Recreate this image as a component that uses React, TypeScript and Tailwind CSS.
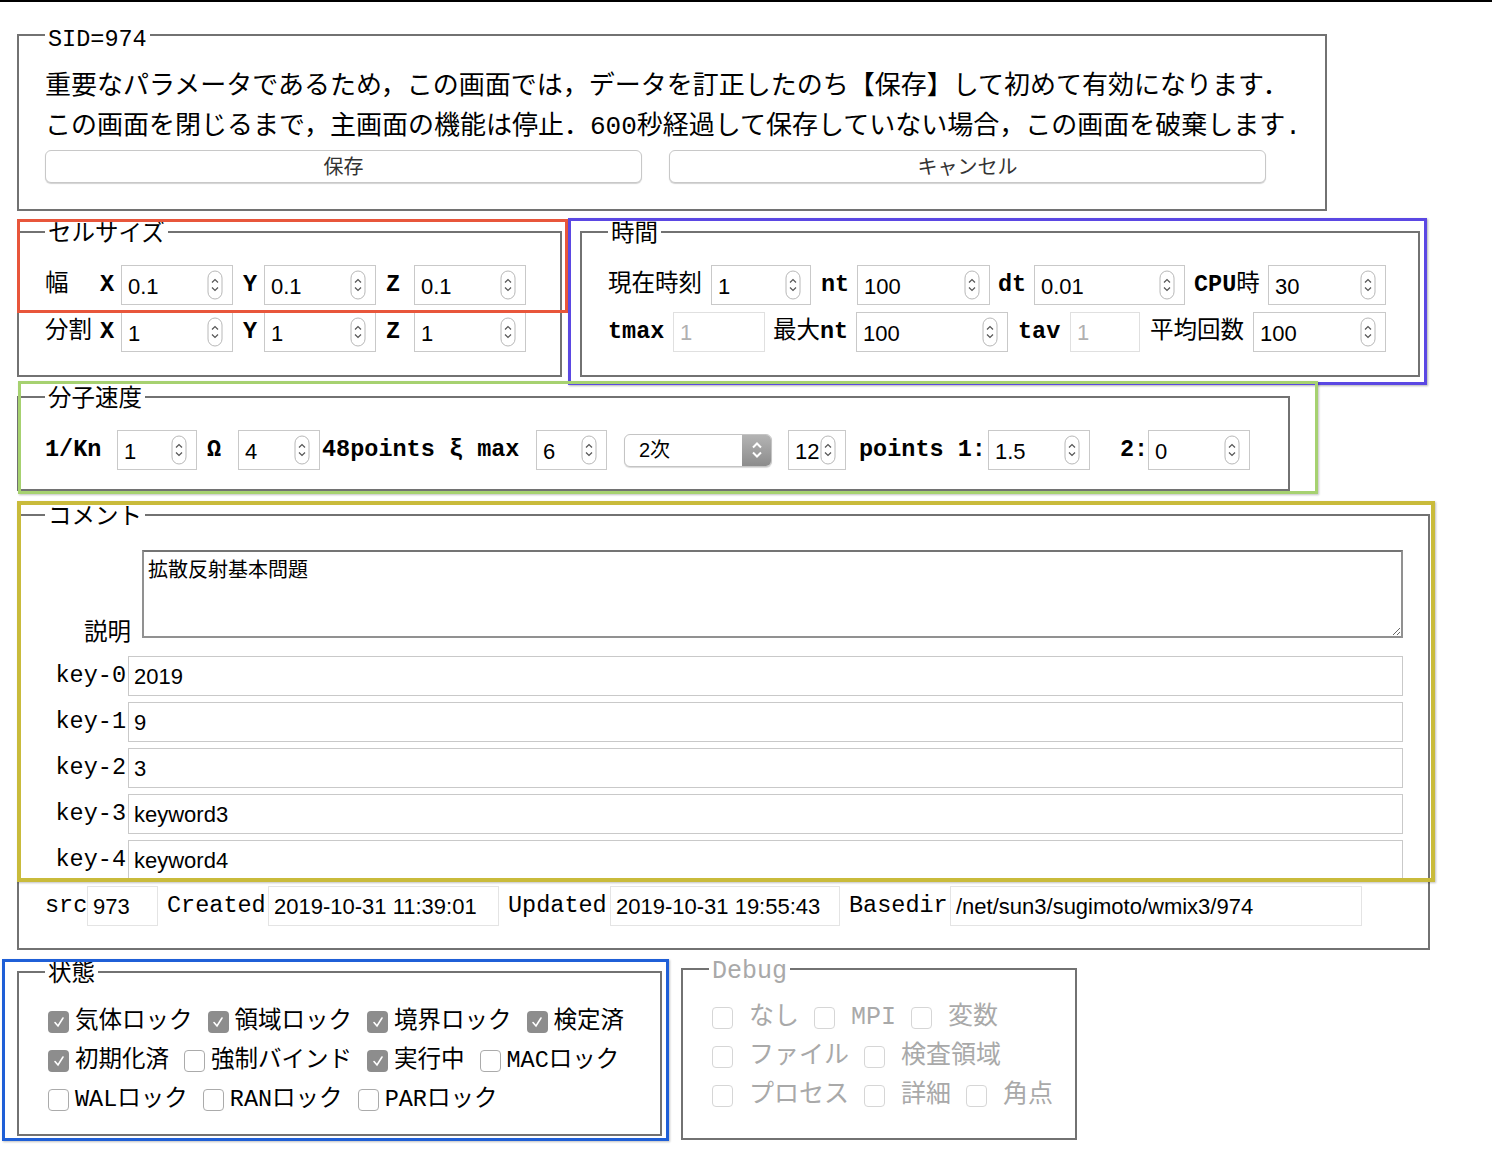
import React from 'react'

const mono = "font-['Liberation_Mono','Noto_Sans_CJK_JP',monospace]"
const sans = "font-['Liberation_Sans','Noto_Sans_CJK_JP',sans-serif]"

// 数値入力のスピナー（Mac風）
function Spin() {
  return (
    <svg width="16" height="30" viewBox="0 0 16 30" className="shrink-0">
      <rect x="1" y="1" width="14" height="28" rx="7" fill="white" stroke="#b8b8b8" />
      <path d="M5 12.5 L8 9.5 L11 12.5" fill="none" stroke="#555" strokeWidth="1.2" />
      <path d="M5 17.5 L8 20.5 L11 17.5" fill="none" stroke="#555" strokeWidth="1.2" />
    </svg>
  )
}

function Num({ v, w }: { v: string; w: string }) {
  return (
    <div className={`${w} h-[40px] shrink-0 flex items-center justify-between border border-[#c9c9c9] bg-white pl-[6px] pr-[9px] ${sans} text-[22px] font-normal text-black`}>
      <span className="pt-[3px]">{v}</span>
      <Spin />
    </div>
  )
}

function Dis({ v, w }: { v: string; w: string }) {
  return (
    <div className={`${w} h-[40px] shrink-0 flex items-center border border-[#e0e0e0] bg-white pl-[6px] ${sans} text-[22px] font-normal text-[#b0b0b0]`}>
      <span className="pt-[1px]">{v}</span>
    </div>
  )
}

function Txt({ v, w, light }: { v: string; w: string; light?: boolean }) {
  return (
    <div className={`${w} h-[40px] shrink-0 flex items-center border ${light ? 'border-[#e4e4e4]' : 'border-[#c9c9c9]'} bg-white pl-[5px] ${sans} text-[22px] text-black`}>
      <span>{v}</span>
    </div>
  )
}

function Legend({ children, className = '' }: { children: React.ReactNode; className?: string }) {
  return <legend className={`px-[3px] leading-[26px] ${className}`}>{children}</legend>
}

function Check({ on, dim }: { on?: boolean; dim?: boolean }) {
  if (on) {
    return (
      <span className="w-[21px] h-[22px] shrink-0 rounded-[4px] bg-[#8d8d8d] flex items-center justify-center">
        <svg width="14" height="14" viewBox="0 0 14 14">
          <path d="M3 7.5 L6 11 L11 3" fill="none" stroke="white" strokeWidth="1.6" strokeLinecap="round" />
        </svg>
      </span>
    )
  }
  return (
    <span className={`w-[21px] h-[22px] shrink-0 rounded-[4px] border bg-white ${dim ? 'border-[#d6d6d6]' : 'border-[#ababab]'}`} />
  )
}

function Item({ label, on }: { label: string; on?: boolean }) {
  return (
    <span className="flex items-center">
      <Check on={on} />
      <span className="ml-[6px]">{label}</span>
    </span>
  )
}

function DItem({ label }: { label: string }) {
  return (
    <span className="flex items-center">
      <Check dim />
      <span className="ml-[16px]">{label}</span>
    </span>
  )
}

const keys = ['2019', '9', '3', 'keyword3', 'keyword4']

export default function App() {
  return (
    <div className={`relative w-[1492px] h-[1154px] overflow-hidden bg-white border-t-2 border-black pl-[17px] ${mono} text-[23.5px] text-black`}>
      {/* SID */}
      <fieldset className="mt-[15px] w-[1310px] border-2 border-[#727272] pl-[26px] pt-[14px] pb-[26px]">
        <Legend className="pt-[10px]">SID=974</Legend>
        <p className="text-[26px] leading-[40px] whitespace-nowrap">
          重要なパラメータであるため，この画面では，データを訂正したのち【保存】して初めて有効になります．
        </p>
        <p className="text-[26px] leading-[40px] whitespace-nowrap">
          この画面を閉じるまで，主画面の機能は停止．600秒経過して保存していない場合，この画面を破棄します.
        </p>
        <div className={`mt-[3px] flex gap-[27px] ${sans} text-[20px] text-[#333]`}>
          <button className="w-[597px] h-[33px] rounded-[6px] border border-[#c8c8c8] bg-white shadow-[0_1px_1px_rgba(0,0,0,0.18)]">保存</button>
          <button className="w-[597px] h-[33px] rounded-[6px] border border-[#c8c8c8] bg-white shadow-[0_1px_1px_rgba(0,0,0,0.18)]">キャンセル</button>
        </div>
      </fieldset>

      <div className="mt-[5px] flex items-start">
        {/* セルサイズ */}
        <fieldset className="w-[545px] border-2 border-[#727272] pl-[26px] pt-[17px] pb-[23px]">
          <Legend className="pt-[6px]">セルサイズ</Legend>
          <div className="flex flex-col gap-[7px]">
            {[['幅', '0.1'], ['分割', '1']].map(([lab, v]) => (
              <div key={lab} className="flex items-center h-[40px]">
                <span className="w-[55px]">{lab}</span>
                <span className="w-[21px] font-bold">X</span>
                <Num v={v} w="w-[112px]" />
                <span className="ml-[10px] w-[21px] font-bold">Y</span>
                <Num v={v} w="w-[112px]" />
                <span className="ml-[10px] w-[28px] font-bold">Z</span>
                <Num v={v} w="w-[112px]" />
              </div>
            ))}
          </div>
        </fieldset>

        {/* 時間 */}
        <fieldset className="ml-[18px] w-[840px] border-2 border-[#727272] pl-[26px] pt-[17px] pb-[23px]">
          <Legend className="px-[2px] pt-[6px]">時間</Legend>
          <div className="flex flex-col gap-[7px]">
            <div className="flex items-center h-[40px]">
              <span className="w-[103px]">現在時刻</span>
              <Num v="1" w="w-[100px]" />
              <span className="ml-[10px] w-[36px] font-bold">nt</span>
              <Num v="100" w="w-[133px]" />
              <span className="ml-[8px] w-[36px] font-bold">dt</span>
              <Num v="0.01" w="w-[151px]" />
              <span className="ml-[9px] w-[74px]"><b>CPU</b>時</span>
              <Num v="30" w="w-[118px]" />
            </div>
            <div className="flex items-center h-[40px]">
              <span className="w-[65px] font-bold">tmax</span>
              <Dis v="1" w="w-[92px]" />
              <span className="ml-[8px] w-[83px]">最大<b>nt</b></span>
              <Num v="100" w="w-[152px]" />
              <span className="ml-[10px] w-[52px] font-bold">tav</span>
              <Dis v="1" w="w-[70px]" />
              <span className="ml-[10px] w-[103px]">平均回数</span>
              <Num v="100" w="w-[133px]" />
            </div>
          </div>
        </fieldset>
      </div>

      {/* 分子速度 */}
      <fieldset className="mt-[4px] w-[1273px] border-2 border-[#727272] pl-[26px] pt-[17px] pb-[19px]">
        <Legend className="pt-[6px]">分子速度</Legend>
        <div className="flex items-center h-[40px] font-bold">
          <span className="w-[72px]">1/Kn</span>
          <Num v="1" w="w-[80px]" />
          <span className="ml-[10px] w-[31px]">Ω</span>
          <Num v="4" w="w-[82px]" />
          <span className="ml-[2px] w-[214px] whitespace-pre">48points ξ max</span>
          <Num v="6" w="w-[71px]" />
          <div className={`ml-[17px] w-[148px] h-[33px] shrink-0 flex rounded-[6px] border border-[#c4c4c4] bg-white shadow-[0_1px_1px_rgba(0,0,0,0.15)] overflow-hidden ${sans} text-[20px] font-normal`}>
            <span className="flex-1 flex items-center pl-[14px]">2次</span>
            <span className="w-[29px] flex items-center justify-center bg-gradient-to-b from-[#b4b4b4] to-[#8c8c8c]">
              <svg width="14" height="22" viewBox="0 0 14 22">
                <path d="M3 8.5 L7 4.5 L11 8.5" fill="none" stroke="white" strokeWidth="2" />
                <path d="M3 13.5 L7 17.5 L11 13.5" fill="none" stroke="white" strokeWidth="2" />
              </svg>
            </span>
          </div>
          <span className="ml-[16px]" />
          <Num v="12" w="w-[58px]" />
          <span className="ml-[13px] w-[129px] whitespace-pre">points 1:</span>
          <Num v="1.5" w="w-[102px]" />
          <span className="ml-[30px] w-[28px]">2:</span>
          <Num v="0" w="w-[102px]" />
        </div>
      </fieldset>

      {/* コメント */}
      <fieldset className="mt-[8px] w-[1413px] border-2 border-[#727272] pl-[26px] pt-[19px] pb-[22px]">
        <Legend className="pt-[6px]">コメント</Legend>
        <div className="flex items-start h-[88px]">
          <div className="w-[97px] h-[88px] pr-[11px] pt-[72px] text-right">
            <span className="block leading-[24px]">説明</span>
          </div>
          <textarea
            readOnly
            defaultValue="拡散反射基本問題"
            className="w-[1261px] h-[88px] border-2 border-[#919191] border-t-[#747474] px-[4px] py-[3px] font-['Noto_Sans_CJK_JP',sans-serif] text-[20px] leading-[28px] outline-none"
          />
        </div>
        <div className="mt-[18px] flex flex-col gap-[6px]">
          {keys.map((k, i) => (
            <div key={i} className="flex items-center h-[40px]">
              <span className="w-[83px] pr-[2px] text-right">key-{i}</span>
              <Txt v={k} w="w-[1275px]" />
            </div>
          ))}
          <div className="flex items-center h-[40px]">
            <span className="w-[42px]">src</span>
            <Txt v="973" w="w-[71px]" light />
            <span className="ml-[9px] w-[101px]">Created</span>
            <Txt v="2019-10-31 11:39:01" w="w-[231px]" light />
            <span className="ml-[9px] w-[102px]">Updated</span>
            <Txt v="2019-10-31 19:55:43" w="w-[230px]" light />
            <span className="ml-[9px] w-[101px]">Basedir</span>
            <Txt v="/net/sun3/sugimoto/wmix3/974" w="w-[412px]" light />
          </div>
        </div>
      </fieldset>

      <div className="mt-[3px] flex items-start">
        {/* 状態 */}
        <fieldset className="mt-[3px] w-[645px] border-2 border-[#727272] pl-[26px] pt-[14px] pb-[15px]">
          <Legend className="pt-[6px]">状態</Legend>
          <div className="ml-[3px] flex flex-col">
            <div className="h-[39px] flex items-center gap-[15px]">
              <Item on label="気体ロック" />
              <Item on label="領域ロック" />
              <Item on label="境界ロック" />
              <Item on label="検定済" />
            </div>
            <div className="h-[39px] flex items-center gap-[15px]">
              <Item on label="初期化済" />
              <Item label="強制バインド" />
              <Item on label="実行中" />
              <Item label="MACロック" />
            </div>
            <div className="h-[39px] flex items-center gap-[15px]">
              <Item label="WALロック" />
              <Item label="RANロック" />
              <Item label="PARロック" />
            </div>
          </div>
        </fieldset>

        {/* Debug */}
        <fieldset className="ml-[19px] w-[396px] border-2 border-[#727272] pl-[26px] pt-[13px] pb-[23px] text-[25px] text-[#a9a9a9]">
          <Legend className="pt-[6px]">Debug</Legend>
          <div className="ml-[3px] flex flex-col">
            <div className="h-[39px] flex items-center gap-[15px]">
              <DItem label="なし" />
              <DItem label="MPI" />
              <DItem label="変数" />
            </div>
            <div className="h-[39px] flex items-center gap-[15px]">
              <DItem label="ファイル" />
              <DItem label="検査領域" />
            </div>
            <div className="h-[39px] flex items-center gap-[15px]">
              <DItem label="プロセス" />
              <DItem label="詳細" />
              <DItem label="角点" />
            </div>
          </div>
        </fieldset>
      </div>

      {/* 注記の枠 */}
      <div className="absolute left-[17px] top-[217px] w-[551px] h-[94px] border-[3px] border-[#e8563b] pointer-events-none" />
      <div className="absolute left-[568px] top-[216px] w-[859px] h-[167px] border-[3px] border-[#5b48e3] shadow-[1px_1px_2px_rgba(0,0,0,0.3)] pointer-events-none" />
      <div className="absolute left-[18px] top-[379px] w-[1300px] h-[113px] border-[3px] border-[#a6d170] shadow-[1px_1px_2px_rgba(0,0,0,0.25)] pointer-events-none" />
      <div className="absolute left-[17px] top-[499px] w-[1418px] h-[381px] border-[4px] border-[#c9bb3b] shadow-[1px_1px_2px_rgba(0,0,0,0.25)] pointer-events-none" />
      <div className="absolute left-[2px] top-[957px] w-[667px] h-[182px] border-[3px] border-[#1f5fd7] shadow-[1px_1px_2px_rgba(0,0,0,0.25)] pointer-events-none" />
    </div>
  )
}
